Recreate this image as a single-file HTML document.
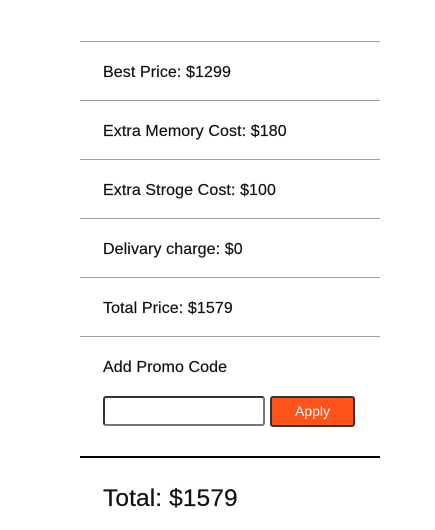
<!DOCTYPE html>
<html><head><style>
body{margin:0;background:#fff;font-family:"Liberation Sans",sans-serif;color:#111;}
.l{position:absolute;left:80px;width:300px;height:1px;background:#a0a0a0}
.t{position:absolute;left:103px;font-size:16px;line-height:20px;white-space:nowrap;letter-spacing:0.1px;-webkit-text-stroke:0.2px #111}
</style></head><body>
<div class="l" style="top:41px"></div>
<div class="t" style="top:63px">Best Price: $1299</div>
<div class="l" style="top:100px"></div>
<div class="t" style="top:122px">Extra Memory Cost: $180</div>
<div class="l" style="top:159px"></div>
<div class="t" style="top:181px">Extra Stroge Cost: $100</div>
<div class="l" style="top:218px"></div>
<div class="t" style="top:240px">Delivary charge: $0</div>
<div class="l" style="top:277px"></div>
<div class="t" style="top:299px">Total Price: $1579</div>
<div class="l" style="top:336px"></div>
<div class="t" style="top:358px">Add Promo Code</div>
<div style="position:absolute;left:103px;top:396px;width:158px;height:26px;border:2px solid #333;border-right-color:#777;border-bottom-color:#777;border-radius:3px"></div>
<div style="position:absolute;left:270px;top:396px;width:81px;height:27px;border:2px solid #333;border-radius:3px;background:#ff5419;color:#fff;font-size:14px;line-height:27px;text-align:center">Apply</div>
<div style="position:absolute;left:80px;top:456px;width:300px;height:2px;background:#000"></div>
<div class="t" style="top:485px;font-size:24.5px;line-height:28px">Total: $1579</div>
</body></html>
